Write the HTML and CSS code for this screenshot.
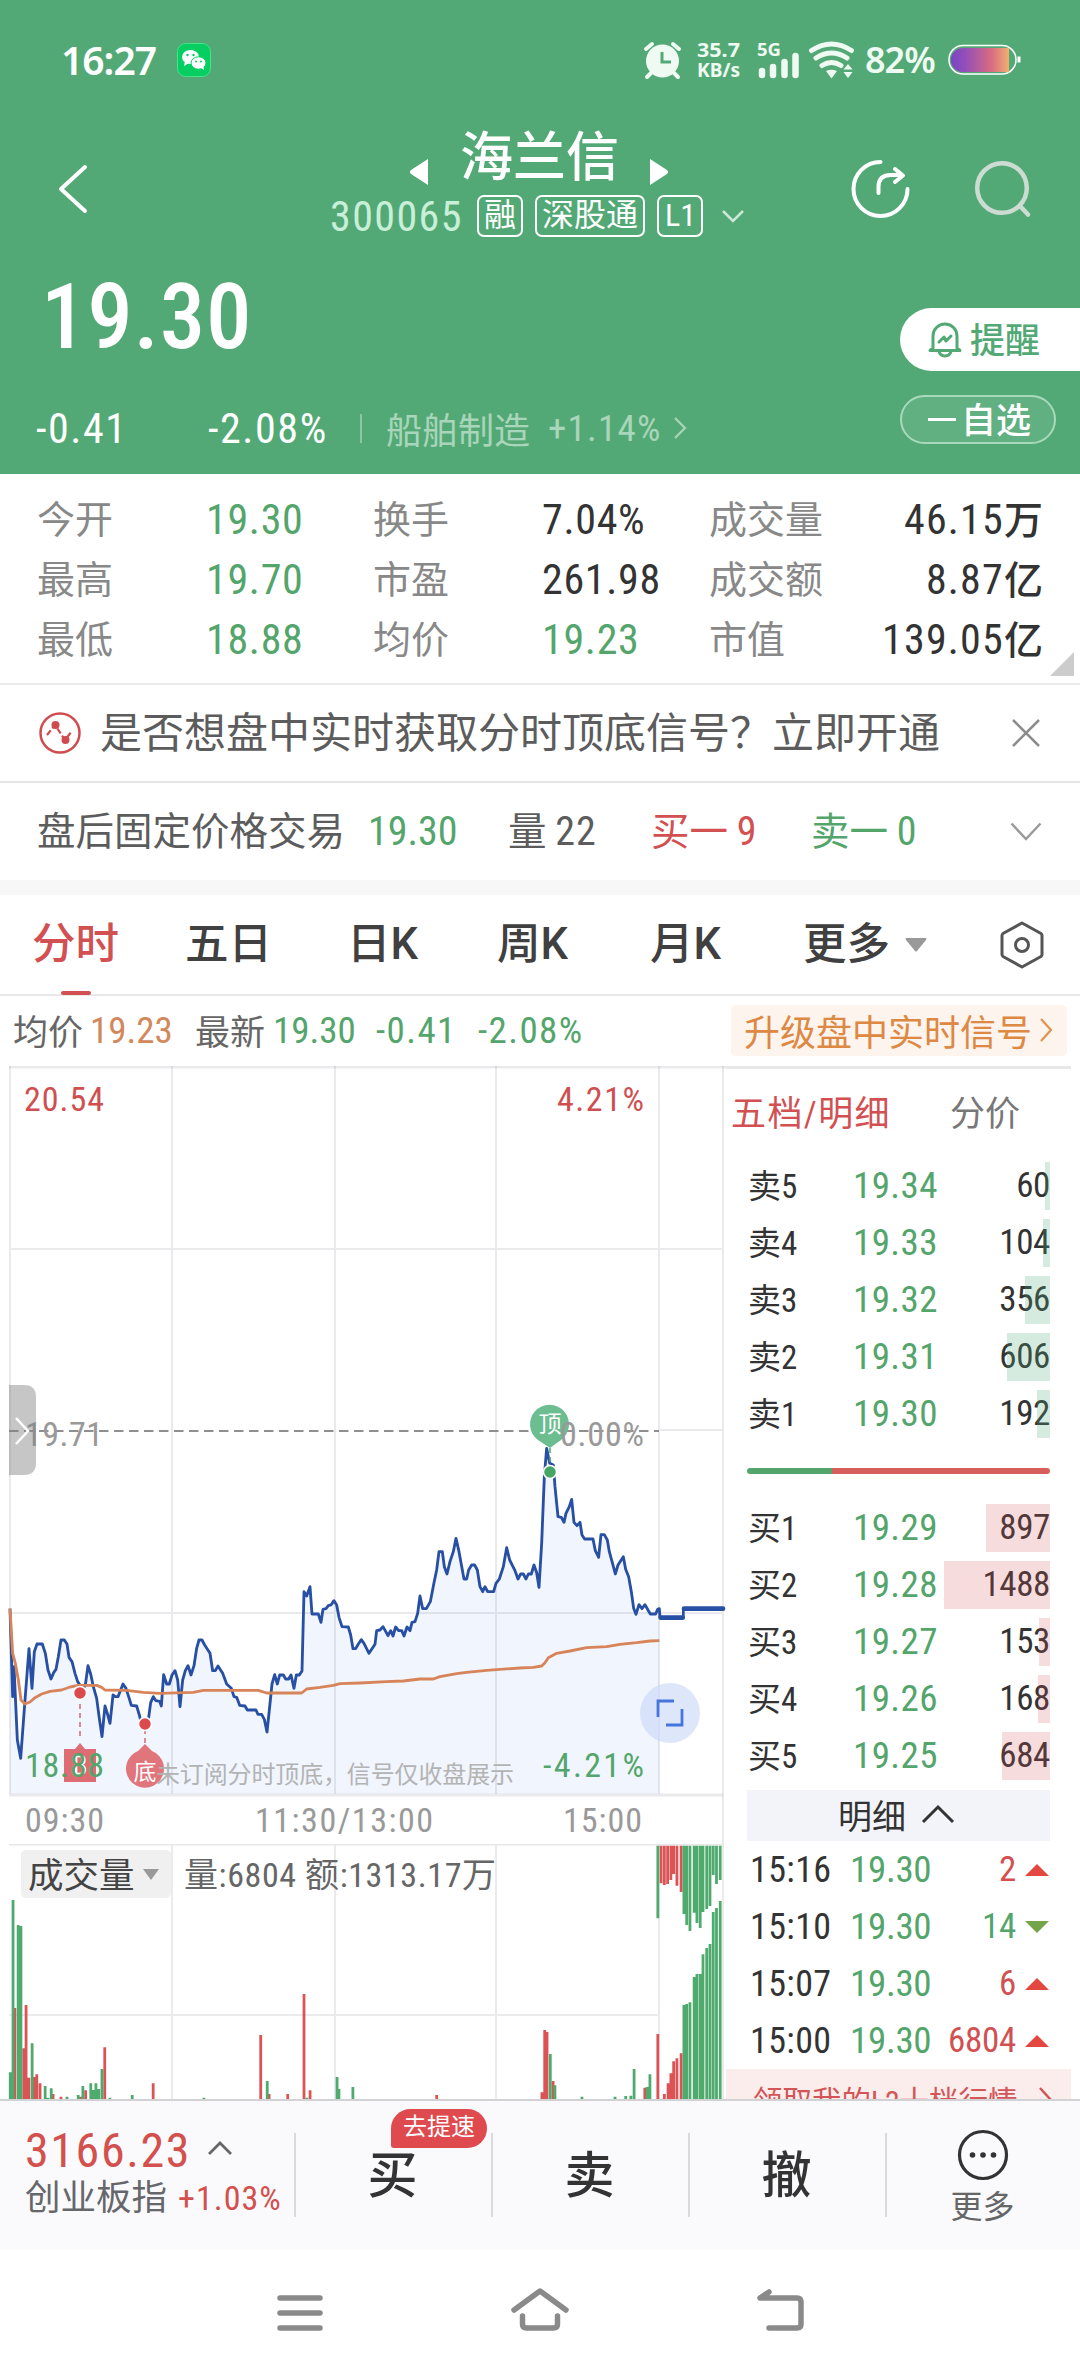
FILE: index.html
```html
<!DOCTYPE html>
<html lang="zh-CN">
<head>
    <meta charset="UTF-8">
    <title>海兰信 300065</title>
    <link rel="stylesheet" href="styles.css">
</head>
<body>
<div class="top">
    <div class="status">
        <span class="clock">16:27</span>
        <svg class="wechat" width="34" height="34" viewBox="0 0 34 34">
            <rect x="0.5" y="0.5" width="33" height="33" rx="8" fill="#06cf62" stroke="#4be08c"/>
            <ellipse cx="13.500" cy="14" rx="8.500" ry="7" fill="#fff"/>
            <path d="M8 18l-1 5 5-3z" fill="#fff"/>
            <ellipse cx="21.500" cy="20" rx="7.500" ry="6.200" fill="#fff" stroke="#06cf62" stroke-width="1"/>
            <path d="M24 25l3 2-.5-4z" fill="#fff"/>
            <g fill="#06cf62"><circle cx="10.500" cy="12" r="1.200"/><circle cx="16.500" cy="12" r="1.200"/><circle cx="19" cy="18.500" r="1"/><circle cx="24" cy="18.500" r="1"/></g>
        </svg>
        <svg class="sys" width="156" height="60" viewBox="643 30 156 60">
            <circle cx="662.500" cy="61" r="16.500" fill="#eefaf2"/>
            <path d="M646 49l6-5M679 49l-6-5M651 73l-4 4M674 73l4 4" stroke="#eefaf2" stroke-width="4" stroke-linecap="round"/>
            <path d="M662 52v10h9" stroke="#53a975" stroke-width="3" fill="none"/>
            <g class="sysText">
                <text x="697" y="57" textLength="43" lengthAdjust="spacingAndGlyphs">35.7</text>
                <text x="697" y="77" textLength="43" lengthAdjust="spacingAndGlyphs">KB/s</text>
                <text x="757" y="56" font-size="18" textLength="24" lengthAdjust="spacingAndGlyphs">5G</text>
            </g>
            <path d="M762 71v4M773 67v8M784.500 62v13M795.500 56v19" stroke="#eefaf2" stroke-width="6.500" stroke-linecap="round"/>
        </svg>
        <svg class="wifi" width="46" height="40" viewBox="808 40 46 40">
            <path d="M811.500 50.500q20-13 40 0M816 58q15.500-10 31 0M822 65.500q9.500-6 19 0" stroke="#eefaf2" stroke-width="5" fill="none" stroke-linecap="round"/>
            <path d="M826 71q5.500-2.500 11 0l-5.500 7.500zM843.500 69.500l4.500-5.500 4.500 5.500zM843.500 72l4.500 6 4.500-6z" fill="#eefaf2"/>
        </svg>
        <span class="percent">82%</span>
        <svg class="battery" width="74" height="32" viewBox="0 0 74 32">
            <defs><linearGradient id="bat"><stop offset="0" stop-color="#7a45c4"/><stop offset=".25" stop-color="#934fb9"/><stop offset=".7" stop-color="#d96c80"/><stop offset="1" stop-color="#efb072"/></linearGradient></defs>
            <rect x="1" y="1.500" width="67" height="28.500" rx="14" fill="none" stroke="#fff" stroke-width="1.500"/>
            <path d="M15 4H61V28H15A12 12 0 0 1 15 4z" fill="url(#bat)"/>
            <path d="M71 12.500v6" stroke="#fff" stroke-width="3"/>
        </svg>
    </div>
    <div class="title">
        <svg class="back" width="34" height="54" viewBox="0 0 34 54"><path d="M30 5L6 27 30 49" class="stroke"/></svg>
        <div class="stock">
            <div class="name">
                <svg width="18" height="26"><path d="M18 0v26L1 15q-2-2 0-4z" fill="#fff"/></svg>
                <h1>海兰信</h1>
                <svg width="18" height="26"><path d="M0 0v26l17-11q2-2 0-4z" fill="#fff"/></svg>
            </div>
            <div class="code">
                <span class="num">300065</span><i>融</i><i>深股通</i><i class="l1">L1</i>
                <svg width="24" height="14" viewBox="0 0 24 14"><path d="M2 2l10 10L22 2" stroke="#c9e8d5" stroke-width="2.500" fill="none"/></svg>
            </div>
        </div>
        <svg class="share" width="62" height="62" viewBox="850 158 62 62">
            <path d="M881.500 162A27 27 0 1 0 908.500 189M879.500 193v-6q0-12 12-12h10M896 169l8 6.500-8 6.500" stroke="#fff" stroke-width="4" fill="none" stroke-linecap="round" stroke-linejoin="round"/>
        </svg>
        <svg class="search" width="60" height="62" viewBox="974 158 60 62">
            <circle cx="1003" cy="188" r="24.800" stroke="#ccdcd2" stroke-width="4.500" fill="none"/>
            <path d="M1021 206l8 8.500" stroke="#ccdcd2" stroke-width="4.500" stroke-linecap="round"/>
        </svg>
    </div>
    <div class="quote">
        <div class="price num">19.30</div>
        <div class="change">
            <span class="num diff">-0.41</span><span class="num rate">-2.08%</span>
            <b class="split"></b>
            <span class="trade">船舶制造</span><span class="num tradeRate">+1.14%</span>
            <svg width="14" height="24" viewBox="0 0 14 24"><path d="M2 2l10 10L2 22" stroke="#a9d5ba" stroke-width="2.200" fill="none"/></svg>
        </div>
        <div class="remind">
            <svg width="34" height="36" viewBox="0 0 34 36" fill="none" stroke="#53a975" stroke-width="3" stroke-linejoin="round" stroke-linecap="round">
                <path d="M5 26V14a12 12 0 0 1 24 0v12l3 2.500H2zM11 29q1 5 6 5t6-5M11 20l5-5 2 4 5-5"/>
            </svg>
            <span>提醒</span>
        </div>
        <div class="fav"><b></b><span>自选</span></div>
    </div>
</div>

<div class="stats">
    <span>今开</span><em class="green">19.30</em><span>换手</span><em>7.04%</em><span>成交量</span><em class="end">46.15<small>万</small></em>
    <span>最高</span><em class="green">19.70</em><span>市盈</span><em>261.98</em><span>成交额</span><em class="end">8.87<small>亿</small></em>
    <span>最低</span><em class="green">18.88</em><span>均价</span><em class="green">19.23</em><span>市值</span><em class="end">139.05<small>亿</small></em>
    <b class="corner"></b>
</div>

<div class="notice">
    <svg width="44" height="44" viewBox="0 0 44 44">
        <circle cx="22" cy="22" r="19.500" fill="none" stroke="#cf4b4e" stroke-width="2.500"/>
        <path d="M9 24l8-10 10 15 7-9" fill="none" stroke="#cf4b4e" stroke-width="2.200" stroke-dasharray="6 2.500"/>
        <circle cx="17.500" cy="14" r="4" fill="#cf4b4e"/><circle cx="27.500" cy="29" r="4" fill="#cf4b4e"/>
    </svg>
    <p>是否想盘中实时获取分时顶底信号？立即开通</p>
    <svg class="close" width="28" height="28" viewBox="0 0 28 28"><path d="M1 1l26 26M27 1L1 27" stroke="#8c8c8c" stroke-width="2.500"/></svg>
</div>

<div class="after">
    <span class="w1">盘后固定价格交易</span>
    <span class="w2 num green">19.30</span>
    <span class="w3">量 <em>22</em></span>
    <span class="w4 red">买一 <em>9</em></span>
    <span class="w5 green">卖一 <em>0</em></span>
    <svg width="32" height="20" viewBox="0 0 32 20"><path d="M1.500 1.500L16 17 30.500 1.500" stroke="#9a9a9a" stroke-width="2.500" fill="none"/></svg>
</div>

<div class="tabs">
    <span class="current">分时</span><span>五日</span><span>日K</span><span>周K</span><span>月K</span><span>更多</span>
    <svg class="drop" width="22" height="14"><path d="M1 0h20q1 0 0 2L12 13q-1 1-2 0L1 2q-1-2 0-2z" fill="#999"/></svg>
    <svg class="set" width="46" height="50" viewBox="1000 920 46 50" fill="none" stroke="#555" stroke-width="3" stroke-linejoin="round">
        <path d="M1023 923l19 10.500q1 1 1 2v19q0 1-1 2L1023 967l-19-10.500q-1-1-1-2v-19q0-1 1-2z"/><circle cx="1023" cy="945" r="6.500"/>
    </svg>
</div>

<div class="latest">
    <span>均价</span><em class="orange avg">19.23</em>
    <span>最新</span><em class="green now">19.30</em><em class="green d">-0.41</em><em class="green r">-2.08%</em>
    <div class="upgrade">升级盘中实时信号<svg width="14" height="26" viewBox="0 0 14 26"><path d="M2 2l10 11L2 24" stroke="#e0934f" stroke-width="2.200" fill="none"/></svg></div>
</div>

<div class="main">
    <div class="charts">
        <svg class="minute" width="726" height="778" viewBox="0 0 726 778">
            <!-- price area -->
            <g transform="translate(0 314) scale(.33333)">
                <path fill="#f0f5fe" d="M30 1241V686L38 950 42 860 52 1080 62 1135 75 960 87 806 96 925 103 815 111 792 127 792 136 820 144 870 153 897 161 878 168 868 175 830 183 780 193 780 201 792 207 832 216 845 225 880 233 905 240 915 250 925 256 915 264 857 272 882 280 920 290 955 298 1015 306 1070 315 978 322 1000 330 1030 339 945 346 950 354 950 369 912 378 925 386 950 394 976 410 978 418 1005 424 1030 435 1035 445 1020 452 968 460 950 468 962 479 964 484 978 491 884 500 912 508 912 516 885 525 872 533 900 540 980 548 900 556 872 564 857 573 885 582 857 590 805 597 780 606 780 614 795 630 820 638 872 646 872 654 858 668 880 680 912 694 925 702 950 710 952 719 976 735 978 742 990 768 990 774 1003 785 1003 793 1018 801 1056 808 990 816 912 824 884 832 912 839 885 850 885 857 897 866 897 873 885 882 925 889 885 898 885 906 873 912 635 920 648 930 620 936 702 955 702 963 727 969 688 978 686 985 677 993 675 1002 662 1010 675 1017 712 1026 740 1045 741 1052 765 1059 806 1067 806 1075 792 1084 779 1092 790 1107 820 1125 793 1130 752 1200 752 1245 725 1260 660 1268 686 1279 686 1291 665 1302 608 1317 515 1327 515 1341 582 1368 475 1392 597 1415 555 1424 555 1440 620 1481 635 1510 560 1520 503 1554 597 1594 582 1602 555 1617 622 1633 290 1640 205 1660 255 1674 410 1692 427 1715 358 1722 427 1740 427 1754 477 1779 477 1796 532 1803 464 1813 464 1846 582 1870 530 1886 590 1908 703 1978 686V1241z"/>
            </g>
            <g stroke="#5a5a6e" stroke-opacity=".13" stroke-width="2">
                <path d="M10 0V728M172 0V728M335 0V728M496 0V728M659 0V728M723 0V778M9 183H723M659 364H723M9 547H723"/>
                <path d="M9 729H723M9 1H726" stroke-width="3"/>
            </g>
            <path d="M9 365H659" stroke="#8f8f8f" stroke-width="2" stroke-dasharray="9.500 5.500"/>
            <g transform="translate(0 314) scale(.33333)" fill="none" stroke-linejoin="round">
                <path stroke="#274fa3" stroke-width="8.500" d="M30 686L38 950 42 860 52 1080 62 1135 75 960 87 806 96 925 103 815 111 792 127 792 136 820 144 870 153 897 161 878 168 868 175 830 183 780 193 780 201 792 207 832 216 845 225 880 233 905 240 915 250 925 256 915 264 857 272 882 280 920 290 955 298 1015 306 1070 315 978 322 1000 330 1030 339 945 346 950 354 950 369 912 378 925 386 950 394 976 410 978 418 1005 424 1030 435 1035 445 1020 452 968 460 950 468 962 479 964 484 978 491 884 500 912 508 912 516 885 525 872 533 900 540 980 548 900 556 872 564 857 573 885 582 857 590 805 597 780 606 780 614 795 630 820 638 872 646 872 654 858 668 880 680 912 694 925 702 950 710 952 719 976 735 978 742 990 768 990 774 1003 785 1003 793 1018 801 1056 808 990 816 912 824 884 832 912 839 885 850 885 857 897 866 897 873 885 882 925 889 885 898 885 906 873 912 635 920 648 930 620 936 702 955 702 963 727 969 688 978 686 985 677 993 675 1002 662 1010 675 1017 712 1026 740 1045 741 1052 765 1059 806 1067 806 1075 792 1084 779 1092 790 1107 820 1125 793 1130 752 1140 750 1149 740 1164 767 1172 752 1179 768 1187 741 1196 752 1205 752 1212 768 1221 741 1230 752 1236 727 1245 725 1253 700 1260 648 1268 686 1279 686 1291 665 1302 608 1310 570 1317 515 1327 515 1333 560 1341 582 1350 545 1360 515 1368 475 1377 515 1392 597 1400 597 1406 570 1415 555 1424 555 1432 570 1440 620 1448 635 1455 620 1463 635 1481 635 1488 610 1498 597 1510 560 1520 503 1529 540 1545 572 1554 597 1562 582 1570 582 1578 597 1585 582 1594 582 1602 555 1610 578 1617 622 1625 490 1633 290 1640 205 1649 250 1660 255 1665 320 1674 410 1684 412 1692 427 1698 400 1708 380 1715 358 1722 427 1731 437 1740 427 1746 465 1754 477 1779 477 1786 512 1796 532 1803 464 1813 464 1822 480 1828 515 1837 548 1846 582 1854 555 1870 530 1877 568 1886 590 1894 635 1901 685 1908 703 1917 674 1926 686 1935 674 1944 690 1951 702 1967 702 1973 688 1978 686 1980 713"/>
                <path stroke="#274fa3" stroke-width="14" stroke-linecap="round" d="M1982 713H2048M2052 686H2169"/>
                <path stroke="#274fa3" stroke-width="8" d="M2050 716V684"/>
                <path stroke="#d8845a" stroke-width="8.500" d="M30 686L38 820 46 850 55 900 63 960 75 972 90 966 105 953 125 942 150 934 185 930 210 921 235 916 290 916 305 922 315 930 380 931 430 937 480 940 580 937 610 931 775 931 800 939 905 939 920 927 960 922 1000 916 1020 911 1080 909 1160 905 1210 903 1260 897 1300 897 1320 890 1370 881 1400 877 1460 871 1560 864 1600 862 1625 858 1635 848 1645 833 1670 820 1710 813 1760 803 1820 800 1860 793 1910 788 1950 783 1978 782"/>
            </g>
            <!-- buy, bottom and top marks -->
            <path d="M80 638v36M145 663v20" stroke="#cf6b72" stroke-width="1.500" stroke-dasharray="5 4"/>
            <path d="M64 683h11l5-6 5 6h11v33H64z" fill="#de6d73"/>
            <path d="M138 685l7-7 7 7a19 19 0 1 1-14 0z" fill="#e0757c"/>
            <path d="M538 374a19.500 19.500 0 1 1 23 0l-11 8z" fill="#6cbd8f"/>
            <path d="M550 382v20" stroke="#4aa568" stroke-width="1.500" stroke-dasharray="5 4"/>
            <g stroke="#fff" stroke-width="1.500"><circle cx="80" cy="627" r="6.500" fill="#dd4a4e"/><circle cx="145" cy="658" r="6.500" fill="#dd4a4e"/><circle cx="550" cy="406" r="6.500" fill="#45a563"/></g>
            <text class="mark" x="80" y="709" font-size="27" text-anchor="middle">B</text>
            <text class="mark" x="145" y="714" font-size="23" text-anchor="middle">底</text>
            <text class="mark" x="550" y="366" font-size="23" text-anchor="middle">顶</text>
            <g class="axis">
                <text x="24" y="45" class="fillRed" textLength="80">20.54</text>
                <text x="557" y="45" class="fillRed" textLength="87">4.21%</text>
                <text x="25" y="380" textLength="78">19.71</text>
                <text x="560" y="380" textLength="84">0.00%</text>
                <text x="25" y="711" class="fillGreen" textLength="79">18.88</text>
                <text x="543" y="711" class="fillGreen" textLength="101">-4.21%</text>
                <text x="25" y="766" textLength="79">09:30</text>
                <text x="255" y="766" textLength="178">11:30/13:00</text>
                <text x="563" y="766" textLength="79">15:00</text>
            </g>
            <text class="tip" x="156" y="717" textLength="358">未订阅分时顶底，信号仅收盘展示</text>
            <path d="M9 319h15q12 0 12 12v66q0 12-12 12H9z" fill="#808080" fill-opacity=".45"/>
            <path d="M16 352l12 13-12 13" fill="none" stroke="#fff" stroke-width="2.500"/>
            <circle cx="670" cy="647" r="30" fill="#c9d6f7" fill-opacity=".62"/>
            <path d="M674 635h-16v16M682 643v16h-16" fill="none" stroke="#4675dd" stroke-width="2.800"/>
        </svg>
        <div class="volume">
            <svg width="726" height="255" viewBox="0 0 726 255">
                <path d="M172 0V255M335 0V255M496 0V255M659 0V255M723 0V255M9 171H659" stroke="#ebebeb" stroke-width="2"/>
                <path d="M9 0H723" stroke="#e8e8e8" stroke-width="3"/>
                <g transform="translate(0 -14) scale(.46556 .33333)" stroke-width="6" fill="none">
                    <path stroke="#dc5355" d="M32 534V810M51 655V810M56 525V810M62 743V810M73 741V810M79 733V810M86 760V810M114 792V810M131 800V810M173 800V810M184 781V810M225 652V810M329 760V810M560 615V810M578 792V810M618 792V810M653 492V810M666 781V810M938 795V810M1164 787V810M1170 600V810M1175 606V810M1188 753V810M1385 773V810M1413 612V810M1427 792V810M1435 760V810M1441 730V810M1447 694V810M1454 685V810M1463 670V810M1420 47V160M1427 47V165M1434 47V162M1441 47V150M1447 47V132M1454 47V167M1463 47V186"/>
                    <path stroke="#4eaa6d" d="M22 727V810M28 210V810M39 285V810M45 288V810M69 640V810M97 768V810M103 803V810M110 775V810M144 800V810M168 795V810M178 768V810M195 760V810M201 780V810M206 760V810M212 777V810M219 717V810M236 803V810M284 795V810M438 803V810M574 753V810M659 803V810M724 741V810M728 777V810M758 771V810M1182 672V810M1192 766V810M1250 800V810M1321 800V810M1344 798V810M1355 797V810M1362 717V810M1390 771V810M1396 733V810M1469 525V810M1475 522V810M1482 517V810M1491 441V810M1497 432V810M1504 432V810M1510 373V810M1518 354V810M1525 342V810M1532 246V810M1539 234V810M1547 213V810M1413 47V265M1469 47V252M1475 47V285M1482 47V303M1491 47V248M1497 47V279M1504 47V294M1510 47V246M1518 47V237M1525 47V228M1532 47V135M1539 47V162M1547 47V150"/>
                </g>
            </svg>
            <div class="volHead">
                <span class="pick">成交量<svg width="16" height="11"><path d="M0 0h16L8 11z" fill="#999"/></svg></span>
                <span class="volNum">量:6804 额:1313.17万</span>
            </div>
        </div>
    </div>
    <div class="side">
        <div class="sideTabs"><span class="red">五档/明细</span><span>分价</span></div>
        <div class="book">
            <div class="row sell"><span>卖5</span><em>19.34</em><b style="width:5px"></b><u>60</u></div>
            <div class="row sell"><span>卖4</span><em>19.33</em><b style="width:7px"></b><u>104</u></div>
            <div class="row sell"><span>卖3</span><em>19.32</em><b style="width:25px"></b><u>356</u></div>
            <div class="row sell"><span>卖2</span><em>19.31</em><b style="width:43px"></b><u>606</u></div>
            <div class="row sell"><span>卖1</span><em>19.30</em><b style="width:13px"></b><u>192</u></div>
            <div class="ratio"><i></i></div>
            <div class="row buy"><span>买1</span><em>19.29</em><b style="width:64px"></b><u>897</u></div>
            <div class="row buy"><span>买2</span><em>19.28</em><b style="width:106px"></b><u>1488</u></div>
            <div class="row buy"><span>买3</span><em>19.27</em><b style="width:11px"></b><u>153</u></div>
            <div class="row buy"><span>买4</span><em>19.26</em><b style="width:12px"></b><u>168</u></div>
            <div class="row buy"><span>买5</span><em>19.25</em><b style="width:48px"></b><u>684</u></div>
        </div>
        <div class="detail">明细<svg width="34" height="20" viewBox="0 0 34 20"><path d="M2 18L17 3l15 15" stroke="#333" stroke-width="3" fill="none"/></svg></div>
        <div class="deals">
            <div class="deal"><span>15:16</span><em>19.30</em><u class="red">2</u><i class="up"></i></div>
            <div class="deal"><span>15:10</span><em>19.30</em><u class="green">14</u><i class="down"></i></div>
            <div class="deal"><span>15:07</span><em>19.30</em><u class="red">6</u><i class="up"></i></div>
            <div class="deal"><span>15:00</span><em>19.30</em><u class="red">6804</u><i class="up"></i></div>
        </div>
        <div class="gift">领取我的L2十档行情<svg width="14" height="26" viewBox="0 0 14 26"><path d="M2 2l10 11L2 24" stroke="#d25557" stroke-width="2.500" fill="none"/></svg></div>
    </div>
</div>

<div class="bar">
    <div class="index">
        <div class="point"><span>3166.23</span><svg width="26" height="15" viewBox="0 0 26 15"><path d="M2 13L13 2l11 11" stroke="#666" stroke-width="2.800" fill="none"/></svg></div>
        <div class="board">创业板指<em>+1.03%</em></div>
    </div>
    <div class="act">买<i>去提速</i></div>
    <div class="act">卖</div>
    <div class="act">撤</div>
    <div class="more">
        <svg width="52" height="52" viewBox="0 0 52 52"><circle cx="26" cy="26" r="23.500" fill="none" stroke="#333" stroke-width="3.200"/><g fill="#333"><circle cx="15.500" cy="26" r="2.800"/><circle cx="26" cy="26" r="2.800"/><circle cx="36.500" cy="26" r="2.800"/></g></svg>
        <span>更多</span>
    </div>
</div>
<div class="nav">
    <svg width="1080" height="126" viewBox="0 2250 1080 126" fill="none" stroke="#8a8a8a" stroke-width="5.500" stroke-linecap="round" stroke-linejoin="round">
        <path d="M280 2298H320M280 2313H320M280 2328H320"/>
        <path d="M514 2310L540 2291 566 2310M522.500 2316v8q0 4 4 4h27q4 0 4-4v-8"/>
        <path d="M769 2292l-9 6h37q4 0 4 4v22q0 4-4 4h-28"/>
    </svg>
</div>
</body>
</html>
```

FILE: styles.css
```css
*{
    margin: 0;
    padding: 0;
    box-sizing: border-box;
}
body{
    width: 1080px;
    height: 2376px;
    overflow: hidden;
    background-color: #fff;
    color: #333;
    font-family: Roboto,"Noto Sans CJK SC",sans-serif;
    font-stretch: 85%;
}
em,i,u,small{
    font-style: normal;
    text-decoration: none;
}
svg{
    display: block;
    flex: none;
    overflow: visible;
}
span,em,u{
    white-space: nowrap;
}
.green{
    color: #53a56b;
}
.red{
    color: #d25052;
}
.orange{
    color: #d3885c;
}
.num,em,u{
    font-weight: 450;
    letter-spacing: 0;
}
/*头部*/
.top{
    height: 474px;
    background-color: #53a975;
    color: #fff;
}
.status{
    height: 120px;
    display: flex;
    align-items: center;
}
.clock{
    width: 101px;
    margin-left: 61px;
    font: 600 39px/40px "Noto Sans",sans-serif;
    letter-spacing: -1px;
}
.wechat{
    margin-left: 15px;
}
.sys{
    margin-left: 432px;
}
.sysText{
    font: 700 20px "Noto Sans",sans-serif;
    fill: #eefaf2;
}
.wifi{
    margin-left: 9px;
}
.percent{
    width: 78px;
    margin-left: 11px;
    font: 600 36px/40px "Noto Sans",sans-serif;
    letter-spacing: -1px;
    color: #eefaf2;
}
.battery{
    margin-left: 5px;
}
.title{
    height: 140px;
    display: flex;
    align-items: flex-start;
}
.back{
    margin: 42px 0 0 55px;
}
.stroke{
    fill: none;
    stroke: #fff;
    stroke-width: 4;
    stroke-linecap: round;
    stroke-linejoin: round;
}
.stock{
    width: 420px;
    margin-left: 241px;
}
.name{
    height: 72px;
    display: flex;
    padding-left: 80px;
}
.name svg{
    margin-top: 39px;
}
.name h1{
    width: 158px;
    margin: 2px 32px 0;
    font-size: 53px;
    line-height: 72px;
    font-weight: 500;
    white-space: nowrap;
}
.code{
    height: 48px;
    display: flex;
    align-items: center;
}
.code span{
    width: 147px;
    font-size: 42px;
    font-weight: 400;
    letter-spacing: 1.4px;
    color: #c9efd9;
}
.code i{
    height: 42px;
    padding: 0 5px;
    margin-right: 12px;
    border: 2px solid #fff;
    border-radius: 7px;
    font-size: 32px;
    line-height: 37px;
}
.code .l1{
    width: 46px;
    padding: 0 6px;
    margin-right: 18px;
}
.share{
    margin: 38px 0 0 99px;
}
.search{
    margin: 38px 0 0 62px;
}
.quote{
    height: 214px;
    position: relative;
}
.price{
    height: 127px;
    padding: 3px 0 0 41px;
    font-size: 91px;
    font-weight: 500;
    line-height: 108px;
    letter-spacing: 0.8px;
}
.change{
    height: 60px;
    padding: 22px 0 0 36px;
    display: flex;
    align-items: center;
    font-size: 42px;
}
.diff{
    width: 172px;
}
.rate{
    width: 152px;
}
.change .diff,.change .rate{
    letter-spacing: 1.6px;
}
.split{
    width: 2px;
    height: 29px;
    margin-right: 24px;
    background-color: #8cc6a2;
}
.trade{
    width: 162px;
    font-size: 36px;
    color: #a9d5ba;
}
.change .tradeRate{
    width: 125px;
    font-size: 37px;
    font-weight: 400;
    letter-spacing: 1.2px;
    color: #a9d5ba;
}
.remind{
    position: absolute;
    right: 0;
    top: 48px;
    width: 180px;
    height: 63px;
    padding-left: 28px;
    display: flex;
    align-items: center;
    border-radius: 32px 0 0 32px;
    background-color: #fff;
    color: #53a975;
    font-size: 35px;
    font-weight: 500;
}
.remind span{
    margin: -4px 0 0 8px;
}
.fav{
    position: absolute;
    right: 24px;
    top: 135px;
    width: 156px;
    height: 49px;
    padding-left: 26px;
    display: flex;
    align-items: center;
    border: 2px solid #a9d9bb;
    border-radius: 25px;
    background-color: #61b082;
    font-size: 35px;
    font-weight: 500;
}
.fav b{
    width: 28px;
    height: 3px;
    margin-right: 5px;
    background-color: #fff;
}
.fav span{
    margin-top: -4px;
}
/*行情数据*/
.stats{
    height: 211px;
    padding: 16px 37px 0;
    display: grid;
    grid-template-columns: 169px 167px 169px 167px 118px 1fr;
    grid-auto-rows: 60px;
    align-items: center;
    position: relative;
    border-bottom: 2px solid #ebebeb;
}
.stats span{
    font-size: 38px;
    color: #888;
    line-height: 60px;
}
.stats em{
    font-size: 42px;
    line-height: 60px;
    letter-spacing: 0.7px;
}
.stats small{
    font-size: 39px;
    letter-spacing: 0;
}
.stats .end{
    text-align: right;
    letter-spacing: 1.2px;
}
.corner{
    position: absolute;
    right: 6px;
    bottom: 7px;
    border-left: 24px solid transparent;
    border-bottom: 24px solid #ccc;
}
.notice{
    height: 98px;
    padding-left: 38px;
    display: flex;
    align-items: center;
    border-bottom: 2px solid #e4e4e4;
}
.notice p{
    width: 912px;
    margin: 2px 0 0 18px;
    font-size: 42px;
    line-height: 60px;
    color: #5c5c5c;
    white-space: nowrap;
}
.after{
    height: 112px;
    padding: 0 0 0 37px;
    display: flex;
    align-items: center;
    border-bottom: 15px solid #f7f7f7;
    font-size: 38.5px;
    color: #5c5c5c;
}
.after span{
    line-height: 50px;
}
.after em{
    font-size: 40px;
    font-weight: 400;
    letter-spacing: 1px;
}
.w1{
    width: 331px;
}
.w2{
    width: 140px;
    font-size: 40px;
}
.after .red{
    color: #d25052;
}
.after .green{
    color: #53a56b;
}
.w3{
    width: 143px;
}
.w4{
    width: 160px;
}
.w5{
    width: 199px;
}
.tabs{
    height: 101px;
    display: flex;
    align-items: center;
    border-bottom: 2px solid #e8e8e8;
    font-size: 43.5px;
    font-stretch: 100%;
    color: #404040;
    padding-left: 32px;
    line-height: 60px;
    font-weight: 500;
}
.tabs span{
    width: 153px;
}
.tabs span:nth-child(2){
    width: 162px;
}
.tabs span:nth-child(3){
    width: 150px;
}
.tabs span:nth-child(6){
    width: 102px;
}
.tabs .current{
    position: relative;
    color: #d25052;
}
.current::after{
    content: "";
    position: absolute;
    left: 29px;
    bottom: -20px;
    width: 30px;
    height: 4px;
    border-radius: 2px;
    background-color: #d25052;
}
.set{
    margin-left: 72px;
}
.latest{
    height: 70px;
    padding-left: 13px;
    display: flex;
    align-items: center;
    font-size: 35px;
    color: #666;
}
.latest span{
    margin-top: -4px;
}
.latest em{
    margin-top: -2px;
    font-size: 37px;
    font-weight: 400;
}
.latest .avg{
    width: 105px;
    margin-left: 7px;
}
.latest .now{
    width: 103px;
    margin-left: 8px;
}
.latest .d{
    width: 102px;
    letter-spacing: 1.4px;
}
.latest .r{
    width: 253px;
    letter-spacing: 1.4px;
}
.upgrade{
    width: 336px;
    height: 51px;
    margin-top: -2px;
    padding-left: 13px;
    display: flex;
    align-items: center;
    border-radius: 5px;
    background-color: #fdf4ee;
    font-size: 36px;
    color: #dd8843;
    white-space: nowrap;
}
.upgrade svg{
    margin-left: 7px;
}
/*图表*/
.main{
    height: 1033px;
    display: flex;
    overflow: hidden;
}
.charts{
    width: 726px;
}
.axis{
    font-size: 34px;
    font-weight: 400;
    fill: #999;
}
.fillRed{
    fill: #cf4f51;
    font-weight: 450;
}
.fillGreen{
    fill: #53a56b;
    font-weight: 450;
}
.mark{
    fill: #fff;
}
.tip{
    font-size: 24px;
    fill: #b3b3b3;
}
.volume{
    position: relative;
    height: 255px;
}
.volume>svg{
    overflow: hidden;
}
.volHead{
    position: absolute;
    left: 21px;
    top: 6px;
    display: flex;
    align-items: center;
    color: #666;
}
.pick{
    width: 150px;
    height: 48px;
    padding: 0 0 4px 7px;
    display: flex;
    align-items: center;
    border-radius: 5px;
    background-color: #f0f0f0;
    font-size: 35.5px;
    color: #444;
}
.pick svg{
    margin: 4px 0 0 8px;
}
.volNum{
    margin: -4px 0 0 13px;
    font-size: 34px;
    letter-spacing: 0.6px;
}
.side{
    width: 345px;
    border-top: 3px solid #e8e8e8;
}
.sideTabs{
    height: 88px;
    padding: 0 0 6px 5px;
    display: flex;
    align-items: center;
    font-size: 35px;
    color: #777;
}
.sideTabs .red{
    width: 219px;
    letter-spacing: 1.4px;
}
.row{
    position: relative;
    height: 57px;
    padding: 0 21px 0 22px;
    display: flex;
    align-items: center;
}
.row span{
    width: 105px;
    margin-top: -3px;
    font-size: 33px;
}
.row em{
    width: 90px;
    font-size: 37px;
    color: #53a56b;
    letter-spacing: 0.4px;
}
.row u{
    flex: 1;
    text-align: right;
    font-size: 35px;
    font-weight: 400;
    letter-spacing: -0.4px;
}
/*委托量背景条*/
.row b{
    position: absolute;
    right: 21px;
    top: 5px;
    height: 48px;
}
.sell b{
    background-color: rgba(83,170,120,.24);
}
.buy b{
    background-color: rgba(215,80,90,.2);
}
.ratio{
    height: 57px;
    padding: 26px 21px 0 21px;
}
.ratio i{
    display: block;
    height: 6px;
    border-radius: 3px;
    background: linear-gradient(90deg,#53a56b 85px,#d75f5b 85px);
}
.detail{
    height: 51px;
    margin: 6px 21px 0;
    padding: 0 0 3px 91px;
    display: flex;
    align-items: center;
    background-color: #f3f4f9;
    font-size: 34px;
}
.detail svg{
    margin-left: 15px;
}
.deal{
    height: 57px;
    padding: 0 22px 0 24px;
    display: flex;
    align-items: center;
}
.deal span{
    width: 100px;
    font-size: 36px;
    letter-spacing: 0.4px;
}
.deal em{
    width: 84px;
    font-size: 37px;
    color: #53a56b;
    letter-spacing: -0.3px;
}
.deal u{
    flex: 1;
    text-align: right;
    font-size: 35px;
    font-weight: 400;
    letter-spacing: -0.3px;
}
.up,.down{
    margin-left: 9px;
    border: 12px solid transparent;
    border-top: 0;
    border-bottom: 12px solid #e2483f;
}
.down{
    border-bottom: 0;
    border-top: 12px solid #75a54b;
}
.gift{
    height: 60px;
    padding: 0 0 0 27px;
    display: flex;
    align-items: center;
    background-color: #fceded;
    font-size: 29.5px;
    color: #d25557;
    white-space: nowrap;
}
.gift svg{
    margin-left: 20px;
}
/*底部*/
.bar{
    height: 151px;
    display: flex;
    border-top: 2px solid #d2d2d4;
    background-color: #fafafc;
}
.index{
    width: 294px;
    padding: 22px 0 0 25px;
}
.point{
    height: 56px;
    display: flex;
    font-size: 48px;
    line-height: 56px;
    font-weight: 450;
    letter-spacing: 1.6px;
    color: #d3504c;
}
.point span{
    width: 182px;
}
.point svg{
    margin-top: 18px;
}
.board{
    font-size: 35.5px;
    line-height: 38px;
    color: #66676b;
    white-space: nowrap;
}
.board em{
    margin-left: 11px;
    font-size: 34px;
    font-weight: 400;
    letter-spacing: 1px;
    color: #d3504c;
}
.act,.more{
    position: relative;
    width: 197px;
    text-align: center;
    font-size: 50px;
    font-weight: 500;
    line-height: 151px;
}
.act::before,.more::before{
    content: "";
    position: absolute;
    left: 0;
    top: 32px;
    width: 2px;
    height: 84px;
    background-color: #dadadc;
}
.act i{
    position: absolute;
    left: 97px;
    top: 8px;
    width: 96px;
    height: 39px;
    border-radius: 20px 20px 20px 3px;
    background-color: #df4a4e;
    color: #fff;
    font-size: 24px;
    font-weight: 400;
    line-height: 37px;
}
.more{
    width: 195px;
    padding-top: 28px;
    font-size: 32px;
    font-weight: 400;
    line-height: 52px;
    color: #666;
}
.more svg{
    margin: 0 auto;
}
.nav{
    height: 126px;
    background-color: #fff;
}
```
